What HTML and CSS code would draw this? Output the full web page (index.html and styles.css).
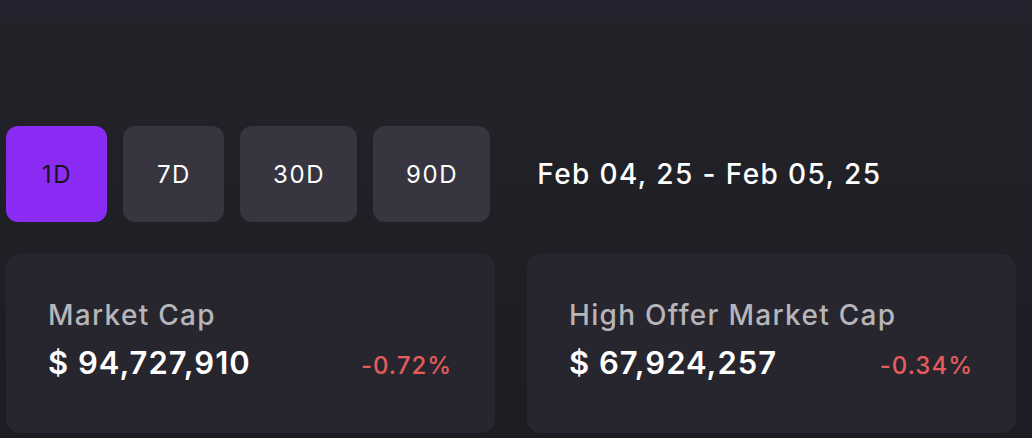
FILE: index.html
```html
<!DOCTYPE html>
<html lang="en">
<head>
<meta charset="utf-8">
<title>Market Stats</title>
<link rel="stylesheet" href="styles.css">
</head>
<body>
<div class="topbar"></div>
<main class="main">
  <div class="controls">
    <div class="ranges">
      <button class="range active">1D</button>
      <button class="range">7D</button>
      <button class="range">30D</button>
      <button class="range">90D</button>
    </div>
    <div class="dates">Feb 04, 25 - Feb 05, 25</div>
  </div>
  <div class="cards">
    <div class="card">
      <div class="label">Market Cap</div>
      <div class="row">
        <span class="value">$ 94,727,910</span>
        <span class="change">-0.72%</span>
      </div>
    </div>
    <div class="card">
      <div class="label">High Offer Market Cap</div>
      <div class="row">
        <span class="value">$ 67,924,257</span>
        <span class="change">-0.34%</span>
      </div>
    </div>
  </div>
</main>
</body>
</html>
```
FILE: styles.css
```css
* { box-sizing: border-box; }
html, body {
  margin: 0;
  height: 100%;
}
body {
  font-family: Inter, "Liberation Sans", sans-serif;
  background: linear-gradient(180deg, #232229 0%, #1f2025 55%, #1c1d22 100%);
  color: #fff;
  overflow: hidden;
}
.topbar {
  height: 22px;
  background: #25232f;
}
.main {
  padding: 104px 16px 0 6px;
}
.controls {
  display: flex;
  align-items: center;
  gap: 47px;
}
.ranges {
  display: flex;
  gap: 16px;
}
.range {
  height: 96px;
  padding: 0 32px 0 33px;
  min-width: 101px;
  border: 0;
  border-radius: 12px;
  background: #37353f;
  color: #fff;
  font-family: inherit;
  font-size: 24px;
  font-weight: 400;
  letter-spacing: 1.6px;
}
.range.active {
  background: #8b2cf5;
  color: #18161d;
}
.dates {
  font-size: 28px;
  font-weight: 500;
  letter-spacing: 1.4px;
  color: #fff;
}
.cards {
  display: grid;
  grid-template-columns: 1fr 1fr;
  gap: 32px;
  margin-top: 32px;
}
.card {
  height: 179px;
  background: #27262e;
  border-radius: 14px;
  padding: 44px 43px 0 42px;
}
.label {
  font-size: 28px;
  font-weight: 500;
  letter-spacing: 1.3px;
  color: #b6b5ba;
  line-height: 34px;
}
.row {
  display: flex;
  justify-content: space-between;
  align-items: baseline;
  margin-top: 12px;
}
.value {
  font-size: 31px;
  font-weight: 600;
  letter-spacing: 1px;
  color: #fff;
}
.change {
  font-size: 24px;
  font-weight: 500;
  letter-spacing: 1px;
  color: #e45c5c;
}
```
